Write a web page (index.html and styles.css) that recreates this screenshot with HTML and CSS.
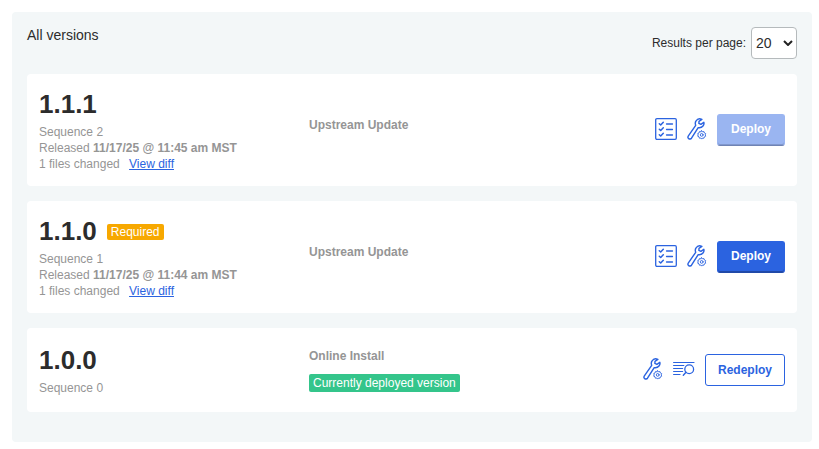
FILE: index.html
```html
<!DOCTYPE html>
<html lang="en">
<head>
<meta charset="utf-8">
<title>All versions</title>
<link rel="stylesheet" href="styles.css">
</head>
<body>
<svg class="sprite" aria-hidden="true">
  <symbol id="checks" viewBox="0 0 22 22">
    <rect x=".7" y=".7" width="20.6" height="20.6" rx="1.2" stroke-width="1.3"/>
    <path d="M4.3 5.7l1.4 1.3L8.3 4.2M4.3 11.2l1.4 1.3 2.6-2.8M4.3 16.7l1.4 1.3 2.6-2.8" stroke-width="1.5"/>
    <path d="M11.5 6h6M11.5 11.5h6M11.5 17h6" stroke-width="1.3"/>
  </symbol>
  <symbol id="wrench" viewBox="0 0 20 22">
    <path d="M16.8 4.3l-2.9 2-2-.9.1-2.1 2.9-1.9c-2.3-1-4.8-.2-5.9 1.6-.9 1.4-.9 2.9-.3 4.3L1.4 17.9c-.7 1-.5 2.1.3 2.7.9.7 2.1.5 2.8-.4l6.7-10.6c1.9.3 3.7-.3 4.8-1.6 1-1.2 1.2-2.5.8-3.7z" stroke-width="1.4"/>
    <path d="M14.7 12.7l.9 1.1 1.4-.2.4 1.4 1.3.6-.5 1.3.5 1.3-1.3.6-.4 1.4-1.4-.2-.9 1.1-.9-1.1-1.4.2-.4-1.4-1.3-.6.5-1.3-.5-1.3 1.3-.6.4-1.4 1.4.2z" stroke-width=".9"/>
    <circle cx="14.7" cy="16.9" r="1.4" stroke-width=".9"/>
  </symbol>
  <symbol id="logs" viewBox="0 0 22 16">
    <path d="M.6 1.5h20.4M.6 4.5h10.2M.6 7.5h9M.6 10.5h9M.6 13.5h6.4" stroke-width="1.2"/>
    <circle cx="16.2" cy="8.2" r="4.4" stroke-width="1.3"/>
    <path d="M13 11.3l-2.7 3" stroke-width="1.4"/>
  </symbol>
</svg>
<main class="panel">
  <header class="panel-head">
    <h1 class="panel-title">All versions</h1>
    <div class="pager">
      <label for="page-size">Results per page:</label>
      <span class="select-wrap">
        <select id="page-size" class="page-size"><option>20</option><option>50</option><option>100</option></select>
        <svg class="chevron" viewBox="0 0 10 6" aria-hidden="true"><path d="M1 1l4 4 4-4"/></svg>
      </span>
    </div>
  </header>
  <section class="version">
    <div class="info">
      <div class="name-row"><h2 class="name">1.1.1</h2></div>
      <p>Sequence 2</p>
      <p>Released <b>11/17/25 @ 11:45 am MST</b></p>
      <p>1 files changed <a class="diff" href="#diff-2">View diff</a></p>
    </div>
    <div class="source"><p class="source-name">Upstream Update</p></div>
    <div class="actions">
      <button class="icon-button" type="button" aria-label="Preflight checks"><svg class="icon-checks"><use href="#checks"/></svg></button>
      <button class="icon-button" type="button" aria-label="Edit config"><svg class="icon-wrench"><use href="#wrench"/></svg></button>
      <button class="button primary" type="button" disabled>Deploy</button>
    </div>
  </section>
  <section class="version">
    <div class="info">
      <div class="name-row"><h2 class="name">1.1.0</h2><span class="tag required">Required</span></div>
      <p>Sequence 1</p>
      <p>Released <b>11/17/25 @ 11:44 am MST</b></p>
      <p>1 files changed <a class="diff" href="#diff-1">View diff</a></p>
    </div>
    <div class="source"><p class="source-name">Upstream Update</p></div>
    <div class="actions">
      <button class="icon-button" type="button" aria-label="Preflight checks"><svg class="icon-checks"><use href="#checks"/></svg></button>
      <button class="icon-button" type="button" aria-label="Edit config"><svg class="icon-wrench"><use href="#wrench"/></svg></button>
      <button class="button primary" type="button">Deploy</button>
    </div>
  </section>
  <section class="version">
    <div class="info">
      <div class="name-row"><h2 class="name">1.0.0</h2></div>
      <p>Sequence 0</p>
    </div>
    <div class="source"><p class="source-name">Online Install</p><span class="tag deployed">Currently deployed version</span></div>
    <div class="actions">
      <button class="icon-button" type="button" aria-label="Edit config"><svg class="icon-wrench"><use href="#wrench"/></svg></button>
      <button class="icon-button" type="button" aria-label="View logs"><svg class="icon-logs"><use href="#logs"/></svg></button>
      <button class="button secondary" type="button">Redeploy</button>
    </div>
  </section>
</main>
</body>
</html>
```
FILE: styles.css
```css
* { box-sizing: border-box; }
body {
  margin: 12px 7px 7px 12px;
  background: #fff;
  color: #2c2c2c;
  font: 12px/16px "Liberation Sans", Arial, sans-serif;
}
h1, h2, p { margin: 0; }
.sprite { position: absolute; width: 0; height: 0; }
symbol { fill: none; stroke: #2b63e0; stroke-linecap: round; stroke-linejoin: round; }
.panel {
  display: flex;
  flex-direction: column;
  gap: 15px;
  padding: 15px 15px 30px;
  background: #f3f7f8;
  border-radius: 4px;
}
.panel-head { display: flex; justify-content: space-between; align-items: flex-start; }
.panel-title { font-size: 14px; line-height: 16px; font-weight: 400; }
.pager { display: flex; align-items: center; gap: 5px; }
.select-wrap { display: grid; align-items: center; }
.page-size {
  grid-area: 1 / 1;
  appearance: none;
  width: 46px;
  height: 32px;
  padding: 0 4px;
  border: 1px solid #b5babc;
  border-radius: 4px;
  background: #fff;
  color: #2c2c2c;
  font: 14px "Liberation Sans", Arial, sans-serif;
}
.chevron {
  grid-area: 1 / 1;
  justify-self: end;
  width: 10px;
  height: 6px;
  margin-right: 4px;
  fill: none;
  stroke: #222;
  stroke-width: 2;
  pointer-events: none;
}
.version {
  display: grid;
  grid-template-columns: 270px 1fr auto;
  align-items: center;
  min-height: 84px;
  padding: 14px 12px;
  background: #fff;
  border-radius: 4px;
}
.info, .source { color: #959595; }
.name-row { display: flex; align-items: center; gap: 10px; margin-bottom: 3px; }
.name { color: #2c2c2c; font-size: 26px; line-height: 33px; font-weight: 700; }
.diff { margin-left: 6px; color: #2b63e0; text-decoration: underline; }
.source-name { margin-bottom: 10px; font-weight: 700; }
.tag {
  display: block;
  width: fit-content;
  padding: 0 4px;
  border-radius: 2px;
  color: #fff;
}
.required { line-height: 16px; background: #f7a800; }
.deployed { line-height: 18px; background: #34c58b; }
.actions { display: flex; align-items: center; gap: 10px; }
.icon-button { display: block; padding: 0 0 2px; border: 0; background: none; cursor: pointer; }
.icon-button svg { display: block; }
.icon-checks { width: 22px; height: 22px; }
.icon-wrench { width: 20px; height: 22px; }
.icon-logs { width: 22px; height: 16px; }
.button {
  height: 32px;
  border: 1px solid #2b63e0;
  border-radius: 3px;
  font: 700 12px "Liberation Sans", Arial, sans-serif;
  cursor: pointer;
}
.primary { padding: 0 13px 2px; color: #fff; background: #2b63e0; box-shadow: inset 0 -1px #2149a8; border-bottom-color: #2149a8; }
.primary:disabled { background: #9ab5f1; border-color: #9ab5f1; border-bottom-color: #6f83b4; box-shadow: inset 0 -1px #8198cd; cursor: default; }
.secondary { padding: 0 12px; color: #2b63e0; background: #fff; }
```
